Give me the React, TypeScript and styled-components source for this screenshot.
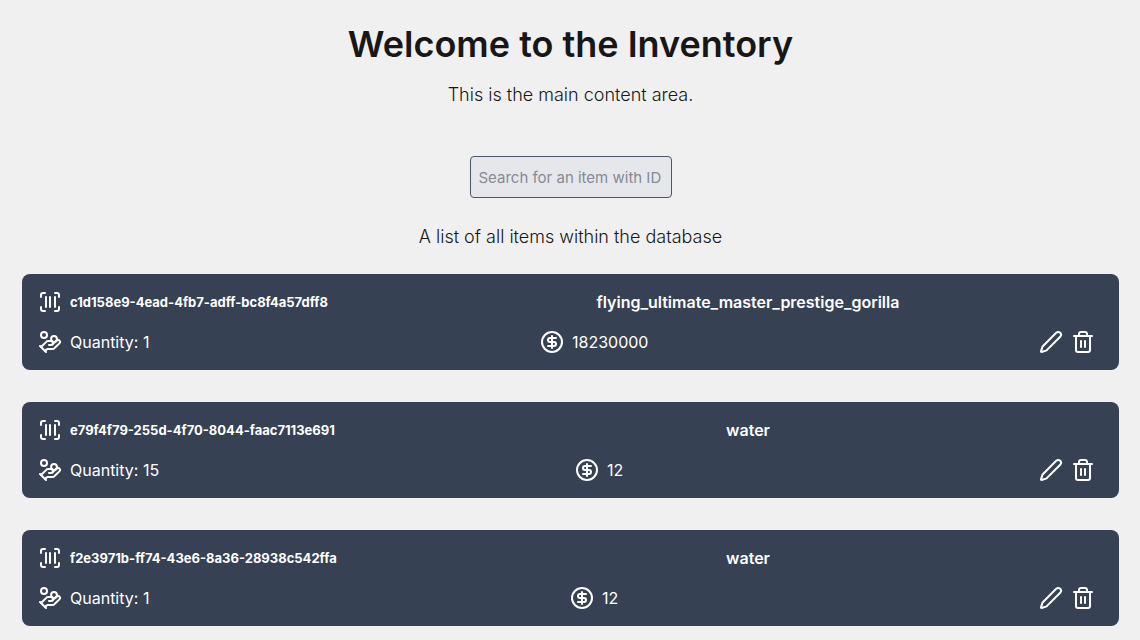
import React from "react";
import styled, { createGlobalStyle } from "styled-components";
import { CircleDollarSign, HandCoins, Pen, ScanBarcode, Trash2 } from "lucide-react";

const GlobalStyle = createGlobalStyle`
  *, *::before, *::after { box-sizing: border-box; }
  body {
    margin: 0;
    background: #f0f0f0;
    color: #171717;
    font-family: Inter, "Liberation Sans", sans-serif;
    font-size: 16px;
    line-height: 24px;
  }
`;

const Page = styled.main`
  display: flex;
  flex-direction: column;
  align-items: center;
  padding: 24px 21px 14px 22px;
`;

const Title = styled.h1`
  margin: 0;
  font-size: 36px;
  line-height: 40px;
  font-weight: 600;
`;

const Text = styled.p`
  margin: 0;
  font-size: 18px;
  line-height: 30px;
  font-weight: 300;
`;

const Intro = styled(Text)`
  margin-top: 16px;
`;

const Search = styled.input`
  width: 202px;
  height: 42px;
  margin: 46px 0 24px;
  padding: 8px;
  border: 1px solid #4a5565;
  border-radius: 4px;
  background: #e5e7eb;
  color: #171717;
  font: inherit;
  font-size: 15px;
  font-weight: 400;

  &::placeholder {
    color: #858a93;
    opacity: 1;
  }
`;

const List = styled.ul`
  display: flex;
  flex-direction: column;
  align-self: stretch;
  gap: 32px;
  margin: 22px 0 0;
  padding: 0;
  list-style: none;
`;

const Card = styled.li`
  display: flex;
  flex-direction: column;
  gap: 16px;
  padding: 16px;
  border-radius: 8px;
  background: #364153;
  color: #ffffff;
`;

const Heading = styled.div`
  display: grid;
  grid-template-columns: 1fr 2fr;
  align-items: center;
`;

const Details = styled.div`
  display: flex;
  align-items: center;
  justify-content: space-between;
  padding-right: 8px;
`;

const Group = styled.div`
  display: flex;
  align-items: center;
  gap: 8px;
  white-space: nowrap;
`;

const ItemId = styled.span`
  font-size: 13px;
  font-weight: 700;
`;

const Name = styled.h2`
  margin: 0;
  font-size: 16px;
  line-height: 24px;
  font-weight: 600;
  text-align: center;
`;

const IconButton = styled.button`
  display: flex;
  padding: 0;
  border: 0;
  background: none;
  color: inherit;
  cursor: pointer;
`;

type Item = { id: string; name: string; quantity: number; price: number };

const items: Item[] = [
  { id: "c1d158e9-4ead-4fb7-adff-bc8f4a57dff8", name: "flying_ultimate_master_prestige_gorilla", quantity: 1, price: 18230000 },
  { id: "e79f4f79-255d-4f70-8044-faac7113e691", name: "water", quantity: 15, price: 12 },
  { id: "f2e3971b-ff74-43e6-8a36-28938c542ffa", name: "water", quantity: 1, price: 12 },
];

function ItemCard({ item }: { item: Item }) {
  return (
    <Card>
      <Heading>
        <Group>
          <ScanBarcode size={24} />
          <ItemId>{item.id}</ItemId>
        </Group>
        <Name>{item.name}</Name>
      </Heading>
      <Details>
        <Group>
          <HandCoins size={24} />
          <span>Quantity: {item.quantity}</span>
        </Group>
        <Group>
          <CircleDollarSign size={24} />
          <span>{item.price}</span>
        </Group>
        <Group>
          <IconButton type="button" aria-label="Edit item">
            <Pen size={24} />
          </IconButton>
          <IconButton type="button" aria-label="Delete item">
            <Trash2 size={24} />
          </IconButton>
        </Group>
      </Details>
    </Card>
  );
}

export default function App() {
  return (
    <>
      <GlobalStyle />
      <Page>
        <Title>Welcome to the Inventory</Title>
        <Intro>This is the main content area.</Intro>
        <Search type="text" aria-label="Search for an item with ID" placeholder="Search for an item with ID" />
        <Text>A list of all items within the database</Text>
        <List>
          {items.map((item) => (
            <ItemCard key={item.id} item={item} />
          ))}
        </List>
      </Page>
    </>
  );
}
